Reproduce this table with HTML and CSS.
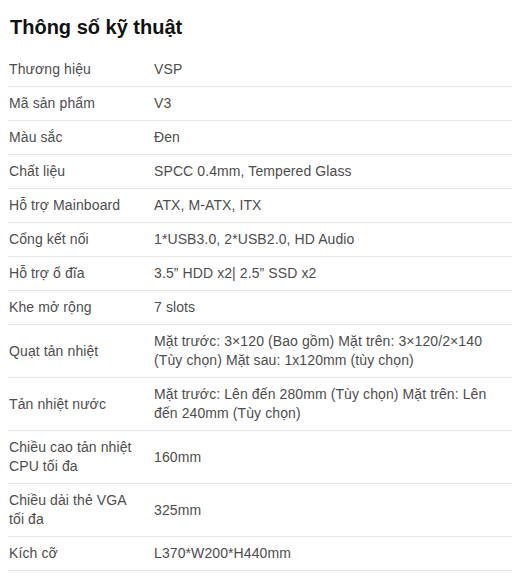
FILE: index.html
```html
<!DOCTYPE html>
<html lang="vi">
<head>
<meta charset="utf-8">
<title>Thông số kỹ thuật</title>
<link rel="stylesheet" href="styles.css">
</head>
<body>
<div class="specs">
  <h2 class="specs-title">Thông số kỹ thuật</h2>
  <div class="spec-table">
    <div class="row"><div class="label">Thương hiệu</div><div class="value">VSP</div></div>
    <div class="row"><div class="label">Mã sản phẩm</div><div class="value">V3</div></div>
    <div class="row"><div class="label">Màu sắc</div><div class="value">Đen</div></div>
    <div class="row"><div class="label">Chất liệu</div><div class="value">SPCC 0.4mm, Tempered Glass</div></div>
    <div class="row"><div class="label">Hỗ trợ Mainboard</div><div class="value">ATX, M-ATX, ITX</div></div>
    <div class="row"><div class="label">Cổng kết nối</div><div class="value">1*USB3.0, 2*USB2.0, HD Audio</div></div>
    <div class="row"><div class="label">Hỗ trợ ổ đĩa</div><div class="value">3.5” HDD x2| 2.5” SSD x2</div></div>
    <div class="row"><div class="label">Khe mở rộng</div><div class="value">7 slots</div></div>
    <div class="row"><div class="label">Quạt tản nhiệt</div><div class="value">Mặt trước: 3×120 (Bao gồm) Mặt trên: 3×120/2×140 (Tùy chọn) Mặt sau: 1x120mm (tùy chọn)</div></div>
    <div class="row"><div class="label">Tản nhiệt nước</div><div class="value">Mặt trước: Lên đến 280mm (Tùy chọn) Mặt trên: Lên đến 240mm (Tùy chọn)</div></div>
    <div class="row"><div class="label">Chiều cao tản nhiệt CPU tối đa</div><div class="value">160mm</div></div>
    <div class="row"><div class="label">Chiều dài thẻ VGA tối đa</div><div class="value">325mm</div></div>
    <div class="row"><div class="label">Kích cỡ</div><div class="value">L370*W200*H440mm</div></div>
  </div>
</div>
</body>
</html>
```
FILE: styles.css
```css
html, body {
  margin: 0;
  padding: 0;
  background: #ffffff;
}

body {
  font-family: "Liberation Sans", Arial, sans-serif;
  color: #4d4d4d;
}

.specs {
  padding: 15px 4px 0 8px;
}

.specs-title {
  margin: 0 0 14px 2px;
  font-size: 20px;
  line-height: 24px;
  font-weight: bold;
  color: #111111;
}

.spec-table {
  display: flex;
  flex-direction: column;
}

.row {
  display: grid;
  grid-template-columns: 146px 1fr;
  align-items: center;
  border-bottom: 1px solid #e6e6e6;
  padding: 7px 0;
  font-size: 14px;
  line-height: 19px;
  letter-spacing: 0.1px;
}

.label {
  padding: 0 12px 0 1px;
}

.value {
  padding: 0 8px 0 0;
}
```
